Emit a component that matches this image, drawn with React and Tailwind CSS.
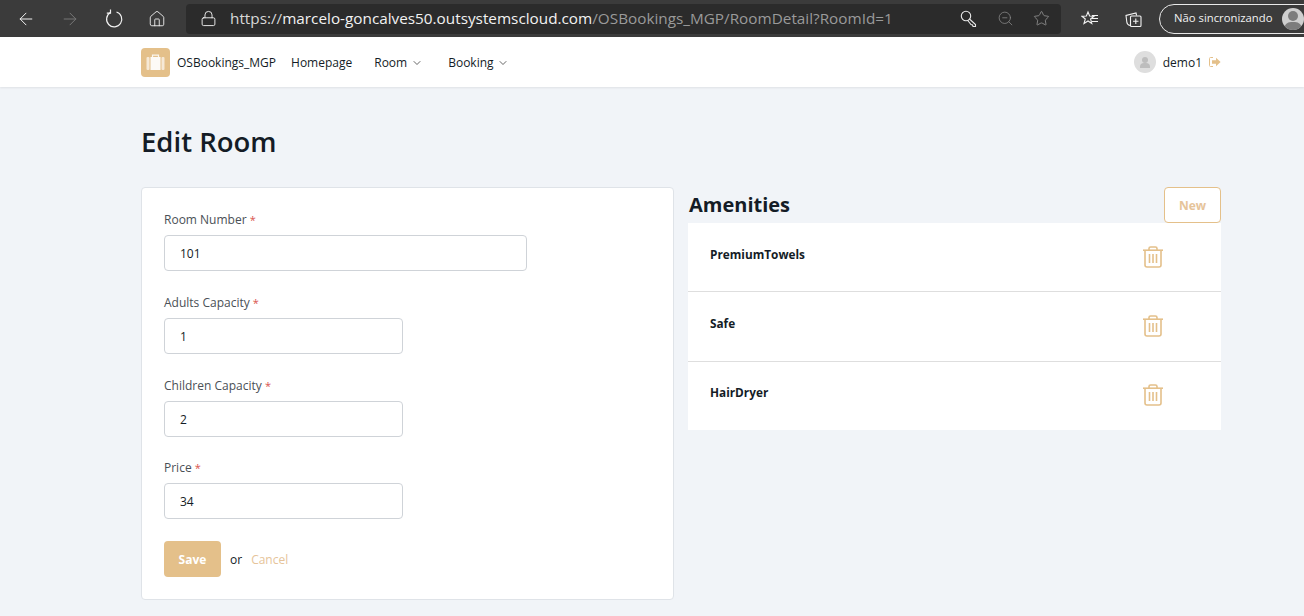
import { ChevronDown, Lock, ZoomOut, Star, ArrowLeft, ArrowRight, Home } from "lucide-react";

function Reload() {
  return (
    <svg width="20" height="20" viewBox="0 0 20 20" fill="none" stroke="#f2f2f2" strokeWidth="1.2">
      <path d="M6.5 3.6 A7.6 7.6 0 1 0 12.5 3" />
      <path d="M6.5 0.5 V4.2 H2.8" />
    </svg>
  );
}

function KeySearch() {
  return (
    <svg width="18" height="18" viewBox="0 0 18 18" fill="none" stroke="#e8e8e8" strokeWidth="1.1">
      <circle cx="6" cy="6" r="4.7" />
      <path d="M9.5 9 L15.5 14.5 L15.5 16.5 L13 16.5 L12.5 15 L11 14.5 L7.8 10.5" />
    </svg>
  );
}

function StarList() {
  return (
    <svg width="18" height="18" viewBox="0 0 18 18" fill="none" stroke="#f2f2f2" strokeWidth="1.1">
      <path d="M7 2 L8.6 6 L13 6.3 L9.6 9 L10.8 13.5 L7 11 L3 13.5 L4.3 9 L1 6.3 L5.4 6 Z" />
      <path d="M11 8.5 H17 M11 11.5 H17 M11 5.5 H17" />
    </svg>
  );
}

function Collections() {
  return (
    <svg width="18" height="18" viewBox="0 0 18 18" fill="none" stroke="#f2f2f2" strokeWidth="1.1">
      <path d="M5 15.5 C3 15 2 14 1.8 12 L1 5.5 L11 3 L11.6 5.5" />
      <rect x="5.5" y="6" width="10.5" height="10.5" rx="1" />
      <path d="M10.8 8.5 V14 M8 11.2 H13.5" />
    </svg>
  );
}

function Suitcase() {
  return (
    <svg width="19" height="17" viewBox="0 0 19 17" fill="none">
      <path d="M6.5 3 V1.2 H12.5 V3" stroke="#fff" strokeOpacity="0.85" strokeWidth="1.2" />
      <rect x="0.5" y="3" width="3" height="13" rx="1" fill="#fff" fillOpacity="0.65" />
      <rect x="4.5" y="3" width="10" height="13" fill="#fff" fillOpacity="0.92" />
      <rect x="15.5" y="3" width="3" height="13" rx="1" fill="#fff" fillOpacity="0.65" />
    </svg>
  );
}

function SignOut() {
  return (
    <svg width="12" height="10" viewBox="0 0 12 10" className="ml-[7px]">
      <path d="M4 0.5 H1.5 Q0.5 0.5 0.5 1.5 V8.5 Q0.5 9.5 1.5 9.5 H4" fill="none" stroke="#e4c08a" strokeWidth="1" />
      <path d="M3 3.2 H7 V0.8 L11.6 5 L7 9.2 V6.8 H3 Z" fill="#e4c08a" />
    </svg>
  );
}

function TrashIcon({ last }) {
  return (
    <svg width="20" height="22" viewBox="0 0 20 22" fill="none" stroke="#e4c08a" strokeWidth="1.6" className={last ? "mt-[22px]" : "mt-[23px]"}>
      <path d="M0 4.2 H20" />
      <path d="M6 4 V2.6 Q6 1 7.6 1 H12.4 Q14 1 14 2.6 V4" />
      <path d="M2 4.2 V19 Q2 21 4 21 H16 Q18 21 18 19 V4.2" />
      <path d="M6.5 8 V17 M10 8 V17 M13.5 8 V17" />
    </svg>
  );
}

function RoomField({ label, value, wide }) {
  return (
    <div>
      <div className="text-[12px] leading-[17px] text-[#4a5056]">
        {label} <span className="text-[11px] text-[#d9534f]">*</span>
      </div>
      <div className={`mt-[7px] flex h-[36px] items-center rounded border border-[#cfd3d8] bg-white pl-[15px] pt-[2px] text-[12px] text-[#141c26] ${wide ? "w-[363px]" : "w-[239px]"}`}>
        {value}
      </div>
    </div>
  );
}

const amenities = [
  { name: "PremiumTowels", row: "h-[69px] border-b border-[#dedede]", top: "mt-[23px]" },
  { name: "Safe", row: "h-[70px] border-b border-[#dedede]", top: "mt-[23px]" },
  { name: "HairDryer", row: "h-[68px]", top: "mt-[22px]", last: true },
];

export default function App() {
  return (
    <div className="h-[616px] overflow-hidden bg-[#f1f4f8] font-['Open_Sans',sans-serif]">
      {/* browser chrome */}
      <div className="flex h-[37px] items-center bg-[#3b3b3b] pl-[16px]">
        <ArrowLeft size={20} strokeWidth={1.2} className="shrink-0 text-[#f2f2f2]" />
        <ArrowRight size={20} strokeWidth={1.2} className="ml-[24px] shrink-0 text-[#777]" />
        <div className="ml-[24px] shrink-0"><Reload /></div>
        <Home size={18} strokeWidth={1.2} className="ml-[24px] shrink-0 text-[#f2f2f2]" />
        <div className="ml-[20px] flex h-[30px] w-[875px] shrink-0 items-center rounded bg-[#2b2b2b] pl-[14px] pr-[11px]">
          <Lock size={17} strokeWidth={1.3} className="text-[#f2f2f2]" />
          <div className="ml-[13px] whitespace-nowrap text-[15.3px] text-[#9a9a9a]">
            <span className="text-[#d8d8d8]">https://</span>
            <span className="text-[#f2f2f2]">marcelo-goncalves50.outsystemscloud.com</span>
            /OSBookings_MGP/RoomDetail?RoomId=1
          </div>
          <div className="ml-auto flex items-center gap-[19px]">
            <KeySearch />
            <ZoomOut size={17} strokeWidth={1.1} className="text-[#888]" />
            <Star size={17} strokeWidth={1.1} className="text-[#999]" />
          </div>
        </div>
        <div className="ml-[20px] shrink-0"><StarList /></div>
        <div className="ml-[26px] shrink-0"><Collections /></div>
        <div className="ml-[16px] flex h-[30px] w-[160px] shrink-0 items-center rounded-full border border-[#e8e8e8] pl-[14px]">
          <span className="whitespace-nowrap text-[11.3px] text-[#f2f2f2]">Não sincronizando</span>
          <div className="relative ml-[9px] h-[22px] w-[22px] shrink-0 overflow-hidden rounded-full bg-[#cfcfcf]">
            <div className="absolute left-[6px] top-[3px] h-[10px] w-[10px] rounded-full bg-[#7d7d7d]" />
            <div className="absolute left-[2px] top-[14px] h-[14px] w-[18px] rounded-full bg-[#7d7d7d]" />
          </div>
        </div>
      </div>

      {/* app header */}
      <div className="h-[50px] bg-white shadow-[0_1px_2px_rgba(0,0,0,0.08)]">
        <div className="ml-[141px] flex h-full w-[1080px] items-center text-[12px] text-[#141c26]">
          <div className="flex h-[29px] w-[29px] items-center justify-center rounded bg-[#e4c08a]"><Suitcase /></div>
          <span className="ml-[7px] pt-[2px]">OSBookings_MGP</span>
          <span className="ml-[15px] pt-[2px]">Homepage</span>
          <span className="ml-[22px] pt-[2px]">Room</span>
          <ChevronDown size={12} strokeWidth={1.5} className="ml-[4px] mt-[1px] text-[#333]" />
          <span className="ml-[25px] pt-[2px]">Booking</span>
          <ChevronDown size={12} strokeWidth={1.5} className="ml-[3px] mt-[1px] text-[#333]" />
          <div className="relative ml-auto flex h-[22px] w-[22px] items-center justify-center overflow-hidden rounded-full bg-[#dedede]">
            <div className="absolute left-[8px] top-[6px] h-[6px] w-[6px] rounded-full bg-[#bdbdbd]" />
            <div className="absolute left-[6px] top-[12px] h-[5px] w-[10px] rounded-t bg-[#bdbdbd]" />
          </div>
          <span className="ml-[7px] pt-[2px]">demo1</span>
          <SignOut />
        </div>
      </div>

      {/* page */}
      <div className="ml-[141px] w-[1080px] pt-[37px]">
        <h1 className="text-[27.5px] font-semibold leading-[36px] text-[#141c26]">Edit Room</h1>
        <div className="mt-[27px] flex">
          <div className="flex h-[413px] w-[533px] flex-col rounded border border-[#dfe3e8] bg-white pl-[22px] pt-[23px]">
            <div className="flex flex-col gap-[22.8px]">
              <RoomField label="Room Number" value="101" wide />
              <RoomField label="Adults Capacity" value="1" />
              <RoomField label="Children Capacity" value="2" />
              <RoomField label="Price" value="34" />
            </div>
            <div className="mt-[22px] flex items-center text-[12px]">
              <div className="flex h-[36px] w-[57px] items-center justify-center rounded bg-[#e4c08a] pt-[1px] font-bold text-white">Save</div>
              <span className="ml-[9px] pt-[1px] text-[#141c26]">or</span>
              <span className="ml-[9px] pt-[1px] text-[#e6c49a]">Cancel</span>
            </div>
          </div>
          <div className="ml-[14px] w-[533px]">
            <div className="flex h-[36px] items-center justify-between">
              <h2 className="pl-[1px] text-[20px] font-bold text-[#141c26]">Amenities</h2>
              <div className="flex h-[36px] w-[57px] items-center justify-center rounded border border-[#e4c08a] bg-white pt-[2px] text-[12px] font-bold text-[#e6c49a]">New</div>
            </div>
            <div className="bg-white">
              {amenities.map((item) => (
                <div key={item.name} className={`flex items-start justify-between pl-[22px] pr-[58px] ${item.row}`}>
                  <span className={`text-[11.8px] font-bold text-[#141c26] ${item.top}`}>{item.name}</span>
                  <TrashIcon last={item.last} />
                </div>
              ))}
            </div>
          </div>
        </div>
      </div>
    </div>
  );
}
